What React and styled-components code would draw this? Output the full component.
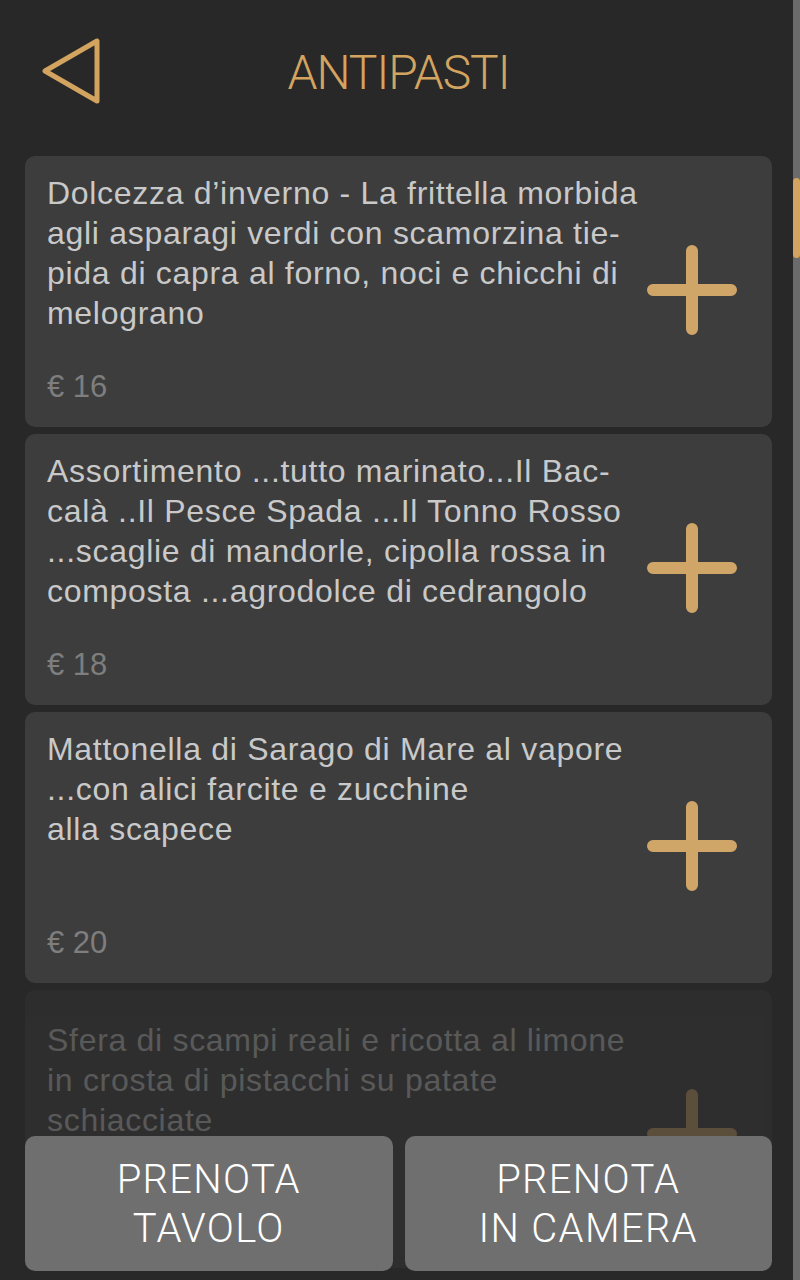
import React from 'react';
import styled, { createGlobalStyle } from 'styled-components';

const GlobalStyle = createGlobalStyle`
  html, body {
    margin: 0;
    padding: 0;
    height: 100%;
    overflow: hidden;
    background: #282828;
  }
  * { box-sizing: border-box; }
`;

const GOLD = '#d3a460';

const Screen = styled.div`
  position: relative;
  width: 800px;
  height: 1280px;
  overflow: hidden;
  background: #282828;
  font-family: 'Liberation Sans', Arial, sans-serif;
`;

const Content = styled.div`
  width: 793px;
  padding: 0 21px 0 25px;
  display: flex;
  flex-direction: column;
`;

const Header = styled.header`
  height: 156px;
  display: grid;
  grid-template-columns: 90px 1fr 90px;
  align-items: center;
  padding-bottom: 12px;
`;

const BackButton = styled.button`
  background: none;
  border: 0;
  padding: 0;
  margin-left: 16px;
  width: 60px;
  height: 68px;
  cursor: pointer;
  display: flex;
  align-items: center;
`;

const Title = styled.h1`
  margin: 0;
  text-align: center;
  font-family: Roboto, 'Liberation Sans', sans-serif;
  font-weight: 300;
  font-size: 48px;
  letter-spacing: -1px;
  color: ${GOLD};
`;

const List = styled.div`
  display: flex;
  flex-direction: column;
  gap: 7px;
`;

const Card = styled.article`
  height: ${(p) => (p.$faded ? 278 : 271)}px;
  border-radius: 10px;
  background: #3d3d3d;
  display: grid;
  grid-template-columns: 1fr 90px;
  column-gap: 10px;
  padding: ${(p) => (p.$faded ? 30 : 17)}px 35px 20px 22px;
  opacity: ${(p) => (p.$faded ? 0.3 : 1)};
`;

const Info = styled.div`
  display: flex;
  flex-direction: column;
  min-width: 0;
`;

const Description = styled.p`
  margin: 0;
  font-size: 32px;
  line-height: 40px;
  letter-spacing: 0.7px;
  color: #c9c9c9;
  white-space: nowrap;
`;

const Price = styled.span`
  margin-top: auto;
  font-size: 31px;
  line-height: 40px;
  color: #7e7e7e;
`;

const AddButton = styled.button`
  align-self: center;
  background: none;
  border: 0;
  padding: 0;
  width: 90px;
  height: 90px;
  cursor: pointer;
`;

const ScrollRail = styled.div`
  position: absolute;
  top: 0;
  right: 0;
  bottom: 0;
  width: 7px;
  background: #6b6b6b;
`;

const ScrollThumb = styled.div`
  width: 7px;
  height: 80px;
  border-radius: 4px;
  background: ${GOLD};
`;

const BookingBar = styled.div`
  position: absolute;
  left: 25px;
  right: 28px;
  bottom: 9px;
  display: grid;
  grid-template-columns: 1fr 1fr;
  gap: 12px;
`;

const BookingButton = styled.button`
  height: 135px;
  border: 0;
  border-radius: 10px;
  background: #6f6f6f;
  color: #ffffff;
  font-family: Roboto, 'Liberation Sans', sans-serif;
  font-weight: 300;
  font-size: 40px;
  line-height: 49px;
  letter-spacing: 1.3px;
  padding: 0;
  cursor: pointer;
`;

const dishes = [
  {
    lines: [
      'Dolcezza d’inverno - La frittella morbida',
      'agli asparagi verdi con scamorzina tie-',
      'pida di capra al forno, noci e chicchi di',
      'melograno',
    ],
    price: 16,
  },
  {
    lines: [
      'Assortimento ...tutto marinato...Il Bac-',
      'calà ..Il Pesce Spada ...Il Tonno Rosso',
      '...scaglie di mandorle, cipolla rossa in',
      'composta ...agrodolce di cedrangolo',
    ],
    price: 18,
  },
  {
    lines: [
      'Mattonella di Sarago di Mare al vapore',
      '...con alici farcite e zucchine',
      'alla scapece',
    ],
    price: 20,
  },
  {
    lines: [
      'Sfera di scampi reali e ricotta al limone',
      'in crosta di pistacchi su patate',
      'schiacciate',
    ],
    price: 22,
    faded: true,
  },
];

function BackIcon() {
  return (
    <svg width="60" height="68" viewBox="0 0 60 68">
      <path
        d="M4 33 L56 3 L56 63 Z"
        fill="none"
        stroke={GOLD}
        strokeWidth="5"
        strokeLinejoin="round"
      />
    </svg>
  );
}

function PlusIcon() {
  return (
    <svg width="90" height="90" viewBox="0 0 90 90">
      <path
        d="M45 6 V84 M6 45 H84"
        stroke="#d0a668"
        strokeWidth="12"
        strokeLinecap="round"
      />
    </svg>
  );
}

export default function App() {
  const scrollOffset = 178;

  return (
    <Screen>
      <GlobalStyle />
      <Content>
        <Header>
          <BackButton aria-label="Indietro">
            <BackIcon />
          </BackButton>
          <Title>ANTIPASTI</Title>
          <span />
        </Header>
        <List>
          {dishes.map((dish, idx) => (
            <Card key={idx} $faded={dish.faded}>
              <Info>
                <Description>
                  {dish.lines.map((line, i) => (
                    <React.Fragment key={i}>
                      {line}
                      {i < dish.lines.length - 1 && <br />}
                    </React.Fragment>
                  ))}
                </Description>
                <Price>€ {dish.price}</Price>
              </Info>
              <AddButton aria-label="Aggiungi">
                <PlusIcon />
              </AddButton>
            </Card>
          ))}
        </List>
      </Content>
      <ScrollRail>
        <ScrollThumb style={{ marginTop: scrollOffset }} />
      </ScrollRail>
      <BookingBar>
        <BookingButton>
          PRENOTA
          <br />
          TAVOLO
        </BookingButton>
        <BookingButton>
          PRENOTA
          <br />
          IN CAMERA
        </BookingButton>
      </BookingBar>
    </Screen>
  );
}
